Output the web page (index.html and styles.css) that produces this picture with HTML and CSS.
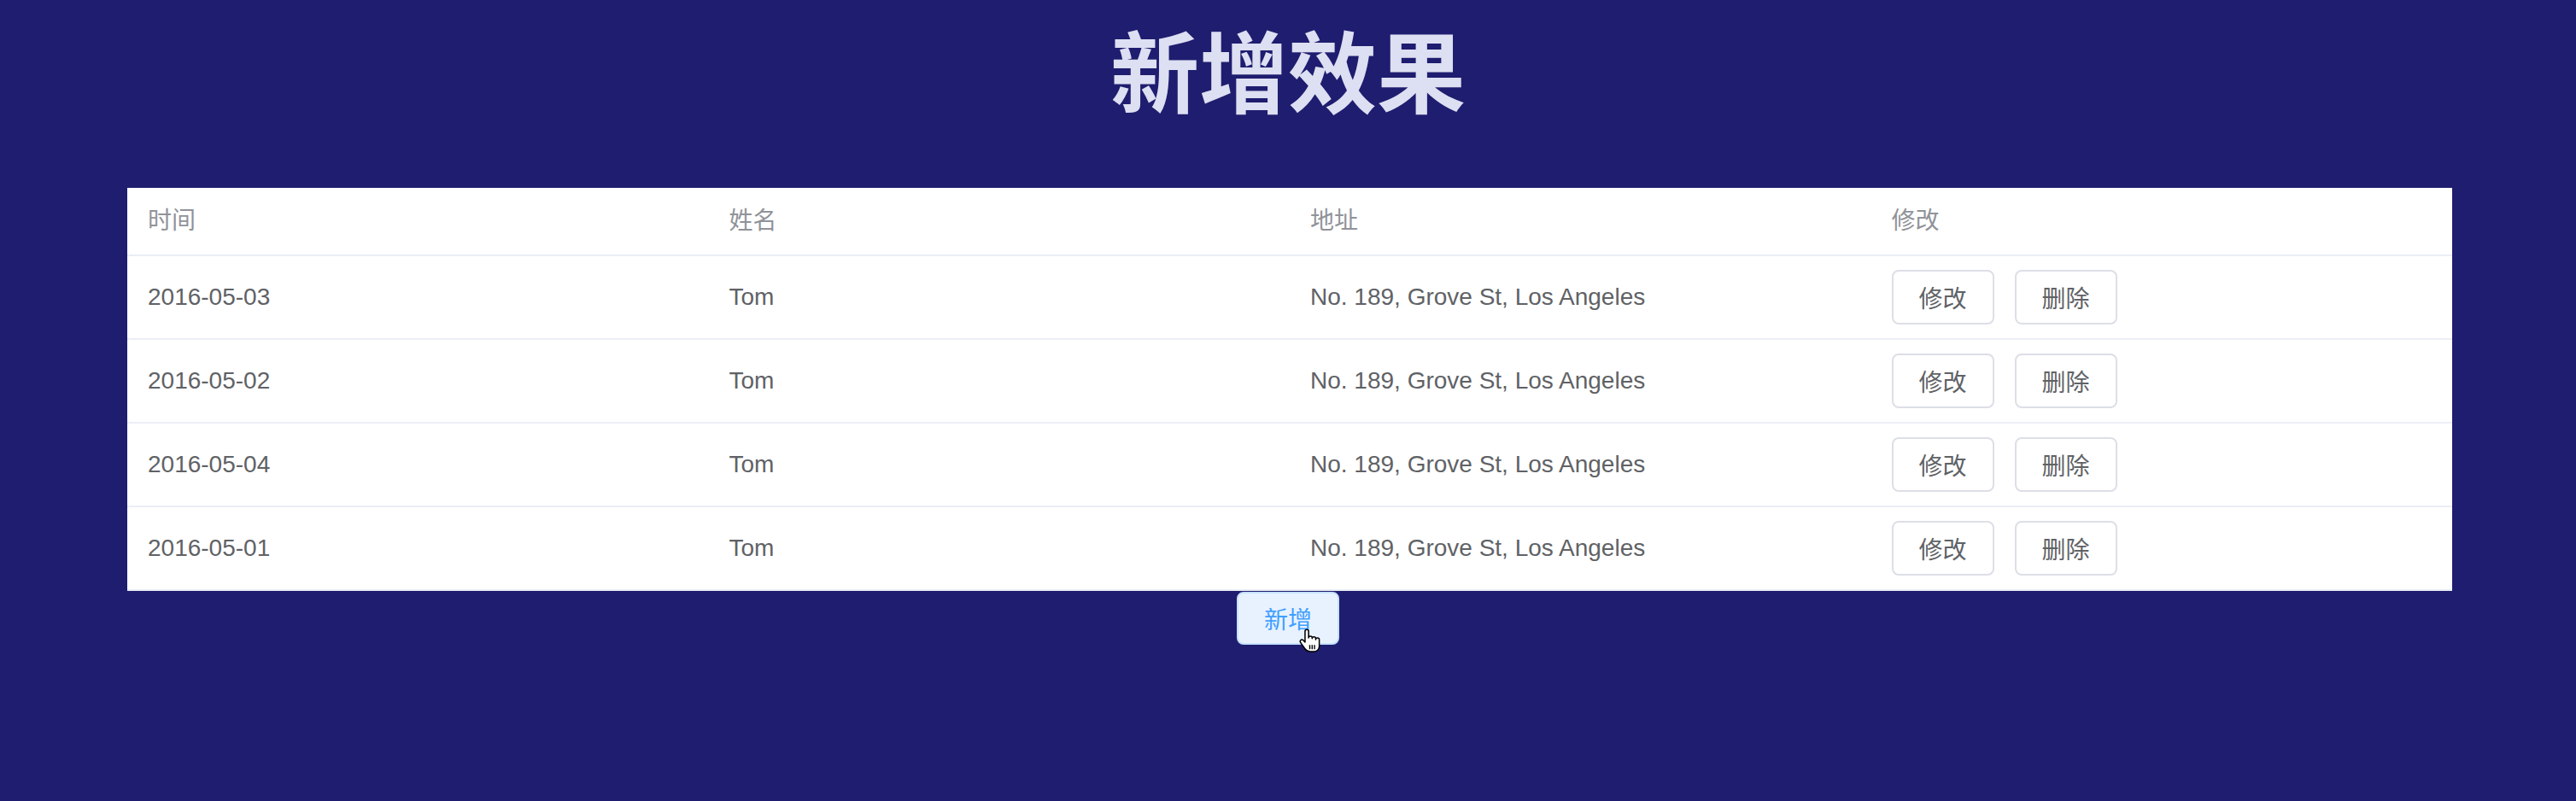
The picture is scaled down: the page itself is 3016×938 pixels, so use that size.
FILE: index.html
```html
<!DOCTYPE html>
<html lang="zh-CN">
<head>
<meta charset="utf-8">
<title>新增效果</title>
<link rel="stylesheet" href="styles.css">
</head>
<body>
<div class="page">
  <h1 class="title">新增效果</h1>
  <div class="table-wrap">
    <table class="data-table">
      <thead>
        <tr>
          <th><div class="cell">时间</div></th>
          <th><div class="cell">姓名</div></th>
          <th><div class="cell">地址</div></th>
          <th><div class="cell">修改</div></th>
        </tr>
      </thead>
      <tbody>
        <tr>
          <td><div class="cell">2016-05-03</div></td>
          <td><div class="cell">Tom</div></td>
          <td><div class="cell">No. 189, Grove St, Los Angeles</div></td>
          <td><div class="cell actions"><button class="btn">修改</button><button class="btn">删除</button></div></td>
        </tr>
        <tr>
          <td><div class="cell">2016-05-02</div></td>
          <td><div class="cell">Tom</div></td>
          <td><div class="cell">No. 189, Grove St, Los Angeles</div></td>
          <td><div class="cell actions"><button class="btn">修改</button><button class="btn">删除</button></div></td>
        </tr>
        <tr>
          <td><div class="cell">2016-05-04</div></td>
          <td><div class="cell">Tom</div></td>
          <td><div class="cell">No. 189, Grove St, Los Angeles</div></td>
          <td><div class="cell actions"><button class="btn">修改</button><button class="btn">删除</button></div></td>
        </tr>
        <tr>
          <td><div class="cell">2016-05-01</div></td>
          <td><div class="cell">Tom</div></td>
          <td><div class="cell">No. 189, Grove St, Los Angeles</div></td>
          <td><div class="cell actions"><button class="btn">修改</button><button class="btn">删除</button></div></td>
        </tr>
      </tbody>
    </table>
  </div>
  <div class="add-row">
    <button class="btn-add">新增
      <svg class="cursor" viewBox="0 0 18 22" width="25" height="31" aria-hidden="true">
        <path d="M6.5 1.5c-.8 0-1.5.7-1.5 1.5v9l-1.5-1.6c-.6-.6-1.6-.6-2.2 0-.5.5-.5 1.3-.1 1.9l3.6 5.2c1 1.4 2.5 2.5 4.3 2.5h3.4c2.500 0 4.5-2 4.5-4.5V10c0-.8-.7-1.5-1.5-1.5S14 9.2 14 10V9c0-.8-.7-1.5-1.5-1.5S11 8.2 11 9V8.5C11 7.7 10.3 7 9.5 7S8 7.7 8 8.5V3c0-.8-.7-1.5-1.5-1.5z" fill="#fff" stroke="#000" stroke-width="1.1" stroke-linejoin="round"/>
        <path d="M9 14.5v3.5M11 14.5v3.5M13 14.5v3.5" stroke="#000" stroke-width="1" fill="none"/>
      </svg>
    </button>
  </div>
</div>
</body>
</html>
```
FILE: styles.css
```css
html, body {
  margin: 0;
  padding: 0;
}

body {
  background: #1f1d6f;
  font-family: "Liberation Sans", "Noto Sans CJK SC", sans-serif;
  width: 3016px;
  height: 938px;
  overflow: hidden;
}

.page {
  display: flex;
  flex-direction: column;
}

.title {
  margin: 0;
  padding-top: 28px;
  height: 104px;
  line-height: 104px;
  font-size: 104px;
  font-weight: 700;
  text-align: center;
  color: #dddff2;
  font-family: "Noto Sans CJK SC", sans-serif;
}

.table-wrap {
  margin-top: 88px;
  padding: 0 145px 0 149px;
}

.data-table {
  width: 100%;
  table-layout: fixed;
  border-collapse: collapse;
  border-spacing: 0;
  background: #ffffff;
}

.data-table th,
.data-table td {
  padding: 16px 0;
  border-bottom: 2px solid #ebeef5;
  text-align: left;
  vertical-align: middle;
  font-size: 28px;
}

.data-table th {
  color: #909399;
  font-weight: 400;
}

.data-table td {
  color: #606266;
}

.cell {
  padding: 0 24px;
  line-height: 46px;
  white-space: nowrap;
}

.actions {
  display: flex;
  gap: 24px;
}

.btn {
  height: 64px;
  padding: 0 30px;
  border: 2px solid #dcdfe6;
  border-radius: 8px;
  background: #ffffff;
  color: #606266;
  font-size: 28px;
  font-family: "Noto Sans CJK SC", sans-serif;
  line-height: 1;
  cursor: pointer;
}

.add-row {
  display: flex;
  justify-content: center;
  padding-top: 1px;
}

.btn-add {
  position: relative;
  width: 120px;
  height: 62px;
  padding: 0;
  border: 2px solid #c6e2ff;
  border-radius: 8px;
  background: #e8f2ff;
  color: #409eff;
  font-size: 28px;
  font-family: "Noto Sans CJK SC", sans-serif;
  line-height: 1;
  cursor: pointer;
}

.cursor {
  position: absolute;
  left: 71px;
  top: 40px;
}
```
